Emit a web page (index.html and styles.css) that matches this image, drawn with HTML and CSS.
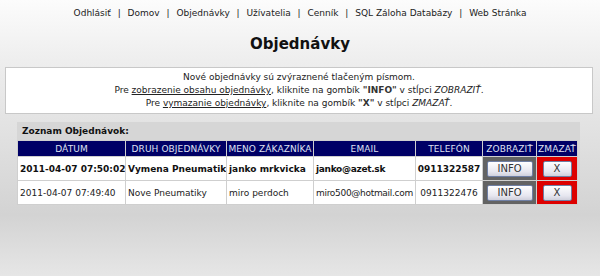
FILE: index.html
```html
<!DOCTYPE html>
<html lang="sk">
<head>
    <meta charset="UTF-8">
    <meta name="viewport" content="width=device-width, initial-scale=1.0">
    <title>Objednávky</title>
    <link rel="stylesheet" href="styles.css">
</head>
<body class="page">
    <div class="menu">
        <a href="#">Odhlásiť</a> | <a href="#">Domov</a> | <a href="#">Objednávky</a> | <a href="#">Užívatelia</a> | <a href="#">Cenník</a> | <a href="#">SQL Záloha Databázy</a> | <a href="#">Web Stránka</a>
    </div>

    <h2 class="title">Objednávky</h2>

    <div class="info">
        Nové objednávky sú zvýraznené tlačeným písmom.<br>
        Pre <u>zobrazenie obsahu objednávky</u>, kliknite na gombík <b>"INFO"</b> v stĺpci <i>ZOBRAZIŤ</i>.<br>
        Pre <u>vymazanie objednávky</u>, kliknite na gombík <b>"X"</b> v stĺpci <i>ZMAZAŤ</i>.
    </div>

    <div class="list">
        <div class="list-caption">Zoznam Objednávok:</div>
        <table class="orders">
            <colgroup>
                <col class="c-date">
                <col class="c-type">
                <col class="c-name">
                <col class="c-mail">
                <col class="c-phone">
                <col class="c-show">
                <col class="c-del">
            </colgroup>
            <tr>
                <th>DÁTUM</th>
                <th>DRUH OBJEDNÁVKY</th>
                <th>MENO ZÁKAZNÍKA</th>
                <th>EMAIL</th>
                <th>TELEFÓN</th>
                <th>ZOBRAZIŤ</th>
                <th>ZMAZAŤ</th>
            </tr>
            <tr class="new">
                <td>2011-04-07 07:50:02</td>
                <td>Vymena Pneumatik</td>
                <td>janko mrkvicka</td>
                <td class="mail">janko@azet.sk</td>
                <td class="phone">0911322587</td>
                <td class="show"><button class="btn btn-info">INFO</button></td>
                <td class="del"><button class="btn btn-del">X</button></td>
            </tr>
            <tr>
                <td>2011-04-07 07:49:40</td>
                <td>Nove Pneumatiky</td>
                <td>miro perdoch</td>
                <td class="mail">miro500@hotmail.com</td>
                <td class="phone">0911322476</td>
                <td class="show"><button class="btn btn-info">INFO</button></td>
                <td class="del"><button class="btn btn-del">X</button></td>
            </tr>
        </table>
    </div>
</body>
</html>
```

FILE: styles.css
```css
.page {
    margin: 0;
    padding: 0;
    height: 276px;
    font-family: "DejaVu Sans", Verdana, sans-serif;
    font-size: 9px;
    color: #222;
    background: linear-gradient(#fcfcfc 0, #eeeeee 60px, #e0e0e0 140px, #d3d3d3 215px, #e6e6e6 276px);
}

.menu {
    text-align: center;
    padding-top: 6px;
    height: 14px;
    line-height: 14px;
}

.menu a {
    color: #222;
    text-decoration: none;
    margin: 0 4px;
}

.title {
    margin: 15px 0 0;
    height: 32px;
    text-align: center;
    font-size: 15px;
    color: #111;
}

.info {
    margin: 0 7px 0 5px;
    padding: 3px 0;
    border: 1px solid #c8c8c8;
    background-color: #fff;
    text-align: center;
    line-height: 13px;
}

.info b {
    color: #333;
}

.list {
    margin: 8px 0 0 17px;
    width: 562px;
    padding: 3px 0 1px 1px;
    background-color: #d6d6d6;
}

.list-caption {
    font-weight: bold;
    color: #111;
    padding-left: 4px;
    line-height: 13px;
    margin-bottom: 3px;
}

.orders {
    width: 561px;
    table-layout: fixed;
    border-spacing: 1px;
    margin: -1px;
    background-color: #cfcfcf;
}

.c-date { width: 107px; }
.c-type { width: 100px; }
.c-name { width: 86px; }
.c-mail { width: 101px; }
.c-phone { width: 66px; }
.c-show { width: 53px; }
.c-del { width: 40px; }

.orders th {
    background-color: #000066;
    color: #dfe0f2;
    font-weight: normal;
    height: 15px;
    padding: 0;
    text-align: center;
    white-space: nowrap;
    letter-spacing: 0.1px;
}

.orders td {
    background-color: #fff;
    height: 23px;
    padding: 0 0 0 2px;
    white-space: nowrap;
    overflow: hidden;
}

.orders td.mail {
    letter-spacing: -0.3px;
}

.orders tr.new td {
    font-weight: bold;
    color: #111;
}

.orders td.phone {
    text-align: center;
    padding: 0;
}

.orders td.show {
    background-color: #636363;
    text-align: center;
    padding: 0;
}

.orders td.del {
    background-color: #dd0000;
    text-align: center;
    padding: 0;
}

.btn {
    font-family: "DejaVu Sans", Verdana, sans-serif;
    font-size: 10px;
    font-weight: normal;
    color: #333;
    height: 16px;
    padding: 0;
    border: 1px solid #6f7fa4;
    border-radius: 2px;
    background: linear-gradient(#ffffff, #e6e6ef 70%, #cfd0dc);
    cursor: pointer;
}

.btn-info {
    width: 46px;
}

.btn-del {
    width: 29px;
}
```
